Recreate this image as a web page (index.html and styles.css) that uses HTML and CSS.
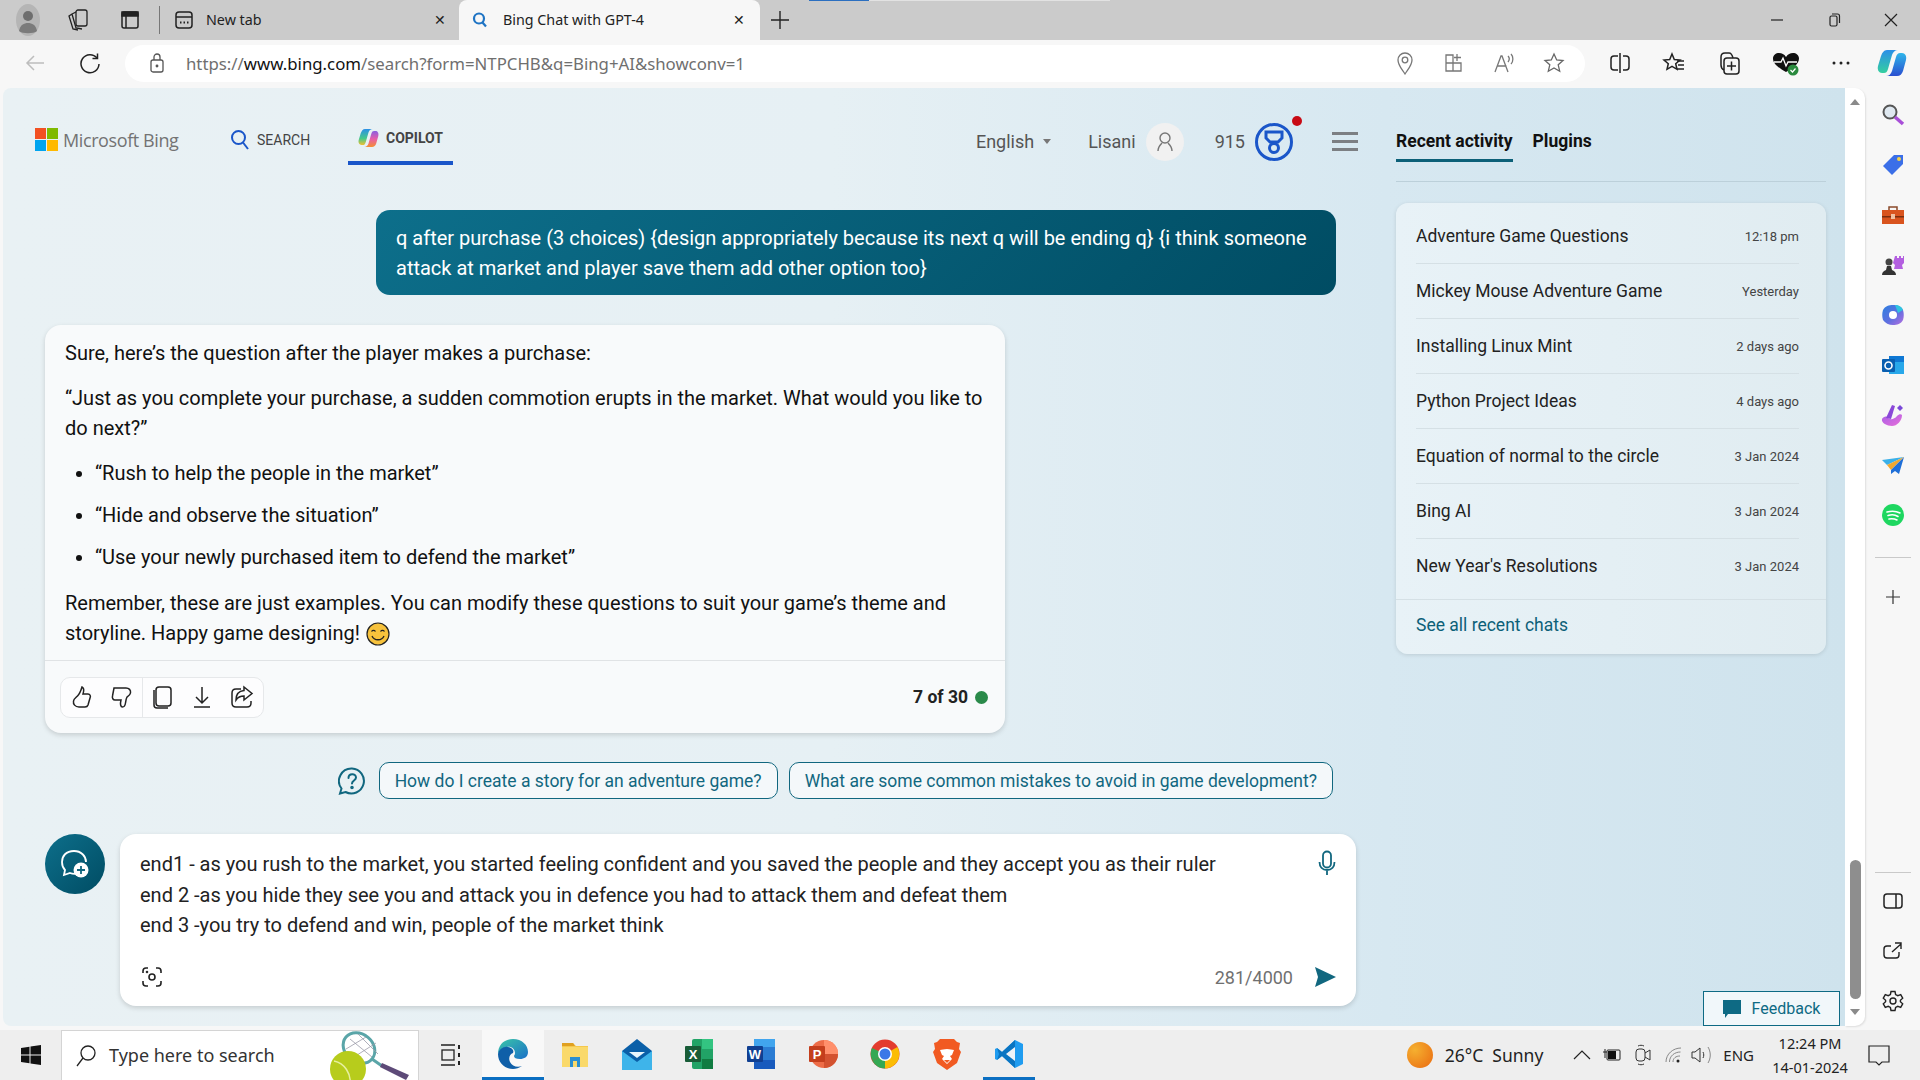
FILE: index.html
```html
<!DOCTYPE html>
<html lang="en">
<head>
  <meta charset="UTF-8">
  <title>Bing Chat with GPT-4</title>
  <link rel="stylesheet" href="styles.css">
</head>
<body>
  <div class="tabbar">
    <div class="progress"></div>
    <div class="tb-btn tb-profile">
      <svg width="24" height="34" viewBox="0 0 24 34"><ellipse cx="12" cy="17" rx="12" ry="16" fill="#b5b5b5"/><circle cx="12" cy="13" r="5" fill="#6e6e6e"/><path d="M3 28c1-6 5-8 9-8s8 2 9 8c-3 3-15 3-18 0z" fill="#7b7b7b"/></svg>
    </div>
    <div class="tb-btn tb-coll">
      <svg width="22" height="24" viewBox="0 0 22 24" fill="none" stroke="#222" stroke-width="1.300"><rect x="9" y="2" width="11" height="16" rx="2"/><path d="M9 4 5 6l4 14 6 1M5 6 2 8l4 13 5 1"/></svg>
    </div>
    <div class="tb-btn tb-tabs">
      <svg width="20" height="20" viewBox="0 0 20 20" fill="none" stroke="#222" stroke-width="1.500"><rect x="2" y="2" width="16" height="16" rx="2"/><rect x="2" y="2" width="16" height="4" fill="#222"/><path d="M6 6v12"/></svg>
    </div>
    <div class="tb-sep"></div>
    <div class="tab tab-new">
      <svg width="20" height="20" viewBox="0 0 20 20" fill="none" stroke="#222" stroke-width="1.500"><rect x="2" y="2" width="16" height="16" rx="3"/><path d="M2 7h16"/><path d="M6 12.500h1.500M9.500 12.500H11M13 12.500h1.500" stroke-width="2"/></svg>
      <span class="tab-title">New tab</span>
      <span class="tab-close">&#x2715;</span>
    </div>
    <div class="tab tab-active">
      <svg width="18" height="18" viewBox="0 0 18 18" fill="none" stroke="#1f74c4" stroke-width="2.200"><circle cx="8" cy="7.500" r="5"/><path d="m11.500 11.500 3.500 4"/></svg>
      <span class="tab-title">Bing Chat with GPT-4</span>
      <span class="tab-close">&#x2715;</span>
    </div>
    <div class="tab-plus">
      <svg width="20" height="20" viewBox="0 0 20 20" stroke="#222" stroke-width="1.400"><path d="M10 1v18M1 10h18"/></svg>
    </div>
    <div class="win-ctrls">
      <svg width="14" height="14" viewBox="0 0 14 14" stroke="#222" stroke-width="1.200"><path d="M1 7h12"/></svg>
      <svg width="14" height="14" viewBox="0 0 14 14" fill="none" stroke="#222" stroke-width="1.200"><rect x="3" y="3" width="7" height="10" rx="1.500"/><path d="M5 1h5.500a2 2 0 0 1 2 2v7"/></svg>
      <svg width="14" height="14" viewBox="0 0 14 14" stroke="#222" stroke-width="1.200"><path d="m1 1 12 12M13 1 1 13"/></svg>
    </div>
  </div>

  <div class="toolbar">
    <svg class="nav-back" width="22" height="22" viewBox="0 0 22 22" fill="none" stroke="#bdbdbd" stroke-width="1.500"><path d="M20 11H3M10 4l-7 7 7 7"/></svg>
    <svg class="nav-reload" width="22" height="22" viewBox="0 0 22 22" fill="none" stroke="#222" stroke-width="1.500"><path d="M18 6a9 9 0 1 0 2 6"/><path d="M18.500 1.500V6.500H13.500"/></svg>
    <div class="address">
      <svg width="16" height="20" viewBox="0 0 16 20" fill="none" stroke="#555" stroke-width="1.300"><rect x="2" y="7" width="12" height="12" rx="2"/><path d="M5 7V4a3 3 0 0 1 6 0v3"/><circle cx="8" cy="13" r=".8" fill="#555"/></svg>
      <span class="url">https://<b>www.bing.com</b>/search?form=NTPCHB&amp;q=Bing+AI&amp;showconv=1</span>
      <div class="addr-icons">
        <svg width="20" height="24" viewBox="0 0 20 24" fill="none" stroke="#777" stroke-width="1.300"><path d="M10 23C6 17 3 14 3 9a7 7 0 0 1 14 0c0 5-3 8-7 14z"/><circle cx="10" cy="9" r="2.800"/></svg>
        <svg width="22" height="22" viewBox="0 0 22 22" fill="none" stroke="#777" stroke-width="1.300"><path d="M10 3H3v8h7V3zM3 11v8h7v-8M10 11h8v8h-8M14 2v7M11 5.500h7"/></svg>
        <svg width="22" height="22" viewBox="0 0 22 22" fill="none" stroke="#777" stroke-width="1.300"><path d="m2 20 6-16h1l6 16M4.500 14h9M15 4c1.500 1.500 1.500 4 0 6M18 2c2.500 2.500 2.500 7.500 0 10"/></svg>
        <svg width="22" height="22" viewBox="0 0 22 22" fill="none" stroke="#666" stroke-width="1.300"><path d="m11 2 2.700 6 6.300.6-4.800 4.200 1.500 6.400L11 16l-5.700 3.200 1.500-6.400L2 8.600 8.300 8z"/></svg>
      </div>
    </div>
    <div class="tool-icons">
      <svg width="22" height="22" viewBox="0 0 22 22" fill="none" stroke="#222" stroke-width="1.500"><path d="M9 4H5a3 3 0 0 0-3 3v8a3 3 0 0 0 3 3h4M11 1v20M14 4h3a3 3 0 0 1 3 3v8a3 3 0 0 1-3 3h-3"/></svg>
      <svg width="24" height="24" viewBox="0 0 24 24" fill="none" stroke="#222" stroke-width="1.500"><path d="m10 3 2.300 5.500 5.700.5-4.300 3.700 1.300 5.600-5-3-5 3 1.300-5.600L2 9l5.700-.5z"/><path d="M15 10h7M16 14h6M15 18h7"/></svg>
      <svg width="24" height="26" viewBox="0 0 24 26" fill="none" stroke="#222" stroke-width="1.500"><rect x="7" y="8" width="15" height="16" rx="3"/><path d="M14.500 11.500v9M10 16h9M7 20c-2-1-3-3-3-5V7c0-2 1-4 4-4h4c2 0 3 1 4 5"/></svg>
      <svg class="heart" width="28" height="26" viewBox="0 0 28 26"><path d="M14 22C7 18 1 14 1 8.500 1 5 4 3 7 3c3 0 5 1 7 4 2-3 4-4 7-4s6 2 6 5.500C27 14 21 18 14 22z" fill="#111"/><path d="M2 12h7l2-4 3 8 2-4h9" fill="none" stroke="#fff" stroke-width="1.300"/><circle cx="21" cy="20" r="5.500" fill="#2a8a3e"/><path d="m18.500 20 2 2 3-3.500" fill="none" stroke="#fff" stroke-width="1.200"/></svg>
      <svg width="20" height="6" viewBox="0 0 20 6" fill="#222"><circle cx="3" cy="3" r="1.500"/><circle cx="10" cy="3" r="1.500"/><circle cx="17" cy="3" r="1.500"/></svg>
      <svg width="30" height="30" viewBox="0 0 30 28"><defs><linearGradient id="cp1" x1="0" y1="0" x2="0" y2="1"><stop offset="0" stop-color="#2a8fe8"/><stop offset="1" stop-color="#35cfa0"/></linearGradient><linearGradient id="cp2" x1="0" y1="0" x2="0" y2="1"><stop offset="0" stop-color="#2fb6ea"/><stop offset="1" stop-color="#2a4fd0"/></linearGradient></defs><path d="M10 1h11c-3 0-5 2-6 5l-4 14c-1 3-2 4-4 4H5c-3 0-5-3-4-7l3-10C5 4 7 1 10 1z" fill="url(#cp1)"/><path d="M20 27H9c3 0 5-2 6-5l4-14c1-3 2-4 4-4h2c3 0 5 3 4 7l-3 11c-1 3-3 5-6 5z" fill="url(#cp2)"/></svg>
    </div>
  </div>

  <div class="content">
    <main class="page">
      <div class="chat-col">
        <header class="head">
          <div class="brand">
            <svg width="23" height="23" viewBox="0 0 23 23"><rect width="11" height="11" fill="#f25022"/><rect x="12" width="11" height="11" fill="#7fba00"/><rect y="12" width="11" height="11" fill="#00a4ef"/><rect x="12" y="12" width="11" height="11" fill="#ffb900"/></svg>
            <span>Microsoft Bing</span>
          </div>
          <div class="nav-item">
            <svg width="20" height="22" viewBox="0 0 20 22" fill="none" stroke="#1a56c9" stroke-width="2"><circle cx="8.500" cy="8.500" r="6.500"/><path d="m13 13.500 5 6.500"/></svg>
            <span>SEARCH</span>
          </div>
          <div class="nav-item nav-active">
            <svg width="21" height="20" viewBox="0 0 30 28"><defs><linearGradient id="cop1" x1="0" y1="0" x2="0" y2="1"><stop offset="0" stop-color="#2a8fe8"/><stop offset=".6" stop-color="#46c98a"/><stop offset="1" stop-color="#f0c030"/></linearGradient><linearGradient id="cop2" x1="0" y1="0" x2="0" y2="1"><stop offset="0" stop-color="#8a5fe0"/><stop offset=".5" stop-color="#e85fa8"/><stop offset="1" stop-color="#f59030"/></linearGradient></defs><path d="M10 1h11c-3 0-5 2-6 5l-4 14c-1 3-2 4-4 4H5c-3 0-5-3-4-7l3-10C5 4 7 1 10 1z" fill="url(#cop1)"/><path d="M20 27H9c3 0 5-2 6-5l4-14c1-3 2-4 4-4h2c3 0 5 3 4 7l-3 11c-1 3-3 5-6 5z" fill="url(#cop2)"/></svg>
            <span>COPILOT</span>
          </div>
          <div class="head-right">
            <span class="lang">English<i class="caret"></i></span>
            <span class="user">Lisani</span>
            <span class="avatar">
              <svg width="18" height="22" viewBox="0 0 18 22" fill="none" stroke="#777" stroke-width="1.400"><circle cx="9" cy="7" r="5"/><path d="M2 20c0-4 2-6 4-8M16 20c0-4-2-6-4-8"/></svg>
            </span>
            <span class="points">915</span>
            <span class="medal">
              <svg width="38" height="38" viewBox="0 0 38 38" fill="none" stroke="#1a56c9" stroke-width="3"><circle cx="19" cy="19" r="17.500"/><path d="M11 9h16v6l-4 4h-8l-4-4z"/><circle cx="19" cy="25" r="4.500"/></svg>
              <i class="red-dot"></i>
            </span>
            <span class="burger"><i></i><i></i><i></i></span>
          </div>
        </header>

        <div class="user-bubble">q after purchase (3 choices) {design appropriately because its next q will be ending q} {i think someone attack at market and player save them add other option too}</div>

        <section class="bot-card">
          <div class="bot-text">
            <p>Sure, here’s the question after the player makes a purchase:</p>
            <p>“Just as you complete your purchase, a sudden commotion erupts in the market. What would you like to do next?”</p>
            <ul>
              <li>“Rush to help the people in the market”</li>
              <li>“Hide and observe the situation”</li>
              <li>“Use your newly purchased item to defend the market”</li>
            </ul>
            <p>Remember, these are just examples. You can modify these questions to suit your game’s theme and storyline. Happy game designing!
              <svg class="emoji" width="24" height="24" viewBox="0 0 24 24"><circle cx="12" cy="12" r="11" fill="#f7c23c" stroke="#222" stroke-width="1.200"/><path d="M5.500 9.500c1-1.500 3-1.500 4 0M14.500 9.500c1-1.500 3-1.500 4 0" fill="none" stroke="#222" stroke-width="1.300"/><path d="M6 14c2 5 10 5 12 0" fill="none" stroke="#222" stroke-width="1.300"/></svg>
            </p>
          </div>
          <div class="bot-foot">
            <div class="actions">
              <div class="act-group">
                <svg width="24" height="24" viewBox="0 0 24 24" fill="none" stroke="#222" stroke-width="1.500"><path d="M12 2c2 1 2 4 1 7h5c2 0 3 2 2 4l-2 7c-.5 1.500-2 2-3 2H9c-4 0-6-3-5.500-6 .3-2 2-3 4-5 2-2 3-4 4.500-9z"/></svg>
                <svg width="24" height="24" viewBox="0 0 24 24" fill="none" stroke="#222" stroke-width="1.500"><path d="M4 3h12c3 0 5 2 4.500 5-.3 2-2 3-3.500 4-1 2-1 3-1.500 6-.3 2-1 4-3 4-2 0-2.500-3-1.500-7H5C3 15 2 13 2.500 11z"/></svg>
              </div>
              <div class="act-group act-right">
                <svg width="24" height="24" viewBox="0 0 24 24" fill="none" stroke="#222" stroke-width="1.500"><rect x="6" y="2" width="15" height="19" rx="3"/><path d="M4 5v15c0 2 1 3 3 3h11"/></svg>
                <svg width="24" height="24" viewBox="0 0 24 24" fill="none" stroke="#222" stroke-width="1.500"><path d="M12 2v16M6 12l6 6 6-6M4 22h16"/></svg>
                <svg width="24" height="24" viewBox="0 0 24 24" fill="none" stroke="#222" stroke-width="1.500"><path d="M11 4H6C3.500 4 2 5.500 2 8v10c0 2.500 1.500 4 4 4h11c2.500 0 4-1.500 4-4v-2"/><path d="M14 2l8 6.500-8 6.500v-4c-4 0-6 1-8 4 0-6 3-9 8-9.500z"/></svg>
              </div>
            </div>
            <div class="turns">7 of 30<i class="green-dot"></i></div>
          </div>
        </section>

        <div class="suggest">
          <svg width="28" height="28" viewBox="0 0 28 28" fill="none" stroke="#11677f" stroke-width="2"><path d="M14 1.500A12.500 12.500 0 1 1 7.500 25L2 26.500l1.500-5A12.500 12.500 0 0 1 14 1.500z"/><path d="M10.500 11c0-5 7.500-5 7.500-.5 0 3-4 3-4 6" stroke-linecap="round"/><circle cx="14" cy="20.500" r=".8" fill="#11677f"/></svg>
          <span class="pill">How do I create a story for an adventure game?</span>
          <span class="pill">What are some common mistakes to avoid in game development?</span>
        </div>

        <div class="composer">
          <div class="new-topic">
            <svg width="30" height="30" viewBox="0 0 30 30" fill="none"><path d="M14 2C6 2 2 7 2 13c0 3 1 6 3 8l-1 5 6-2c2 .8 4 1 6 .8M14 2c7 0 12 5 12 11" stroke="#fff" stroke-width="1.800"/><circle cx="21" cy="21" r="7.500" fill="#fff"/><path d="M21 17v8M17 21h8" stroke="#11677f" stroke-width="1.800"/></svg>
          </div>
          <div class="input-card">
            <div class="input-top">
              <div class="input-text">end1 - as you rush to the market, you started feeling confident and you saved the people and they accept you as their ruler<br>end 2 -as you hide they see you and attack you in defence you had to attack them and defeat them<br>end 3 -you try to defend and win, people of the market think</div>
              <svg width="18" height="26" viewBox="0 0 18 26" fill="none" stroke="#11677f" stroke-width="1.800"><rect x="5" y="1.500" width="8" height="16" rx="4"/><path d="M1.500 12c0 5 3 8 7.500 8s7.500-3 7.500-8M9 20v5"/></svg>
            </div>
            <div class="input-foot">
              <svg class="scan" width="20" height="20" viewBox="0 0 20 20" fill="none" stroke="#222" stroke-width="1.600"><path d="M1 6V4c0-2 1-3 3-3h2M14 1h2c2 0 3 1 3 3v2M19 14v2c0 2-1 3-3 3h-2M6 19H4c-2 0-3-1-3-3v-2"/><circle cx="10" cy="10" r="3"/><circle cx="5" cy="5" r=".5"/></svg>
              <span class="count">281/4000</span>
              <svg width="22" height="22" viewBox="0 0 22 22" fill="#11677f"><path d="M1 1l21 10L1 21l3-10z"/></svg>
            </div>
          </div>
        </div>
      </div>

      <aside class="side-col">
        <div class="side-tabs">
          <span class="side-tab side-tab-on">Recent activity</span>
          <span class="side-tab">Plugins</span>
        </div>
        <div class="recent">
          <div class="row"><span class="row-name">Adventure Game Questions</span><span class="row-time">12:18 pm</span></div>
          <div class="row"><span class="row-name">Mickey Mouse Adventure Game</span><span class="row-time">Yesterday</span></div>
          <div class="row"><span class="row-name">Installing Linux Mint</span><span class="row-time">2 days ago</span></div>
          <div class="row"><span class="row-name">Python Project Ideas</span><span class="row-time">4 days ago</span></div>
          <div class="row"><span class="row-name">Equation of normal to the circle</span><span class="row-time">3 Jan 2024</span></div>
          <div class="row"><span class="row-name">Bing AI</span><span class="row-time">3 Jan 2024</span></div>
          <div class="row"><span class="row-name">New Year's Resolutions</span><span class="row-time">3 Jan 2024</span></div>
          <div class="see-all">See all recent chats</div>
        </div>
      </aside>

      <div class="feedback">
        <svg width="18" height="18" viewBox="0 0 18 18" fill="#0e6a84"><path d="M0 0h18v14H5l-3 4v-4H0z"/></svg>
        <span>Feedback</span>
      </div>
    </main>

    <div class="scroll">
      <i class="arrow-up"></i>
      <div class="thumb"></div>
      <i class="arrow-down"></i>
    </div>

    <nav class="edge-bar">
      <div class="edge-item">
        <svg width="24" height="24" viewBox="0 0 24 24" fill="none"><circle cx="9" cy="9" r="6.500" fill="#dfe8f0" stroke="#555" stroke-width="2"/><path d="m14 14 8 7" stroke="#a84fd8" stroke-width="3.500"/></svg>
      </div>
      <div class="edge-item">
        <svg width="24" height="24" viewBox="0 0 24 24"><path d="M13 2h9v9L11 22 2 13z" fill="#3b6fe8"/><circle cx="18" cy="6" r="2" fill="#f4d24a"/></svg>
      </div>
      <div class="edge-item">
        <svg width="24" height="24" viewBox="0 0 24 24"><path d="M8 7V4h8v3" fill="none" stroke="#8a4a2a" stroke-width="1.500"/><rect x="1" y="7" width="22" height="14" fill="#d9541e"/><rect x="1" y="13" width="22" height="1.500" fill="#7a2e10"/><rect x="10" y="11" width="4" height="5" fill="#f0c0a0"/></svg>
      </div>
      <div class="edge-item">
        <svg width="24" height="24" viewBox="0 0 24 24"><circle cx="8" cy="9" r="3.500" fill="#444"/><path d="M1 22c0-3 2-4 4-5l1-4h4l1 4c2 1 4 2 4 5z" fill="#333"/><path d="M14 3h2v2h2V3h2v2h2V3h1v7l-2 2 1 4h-9l1-4-2-2z" fill="#b35fe0"/></svg>
      </div>
      <div class="edge-item">
        <svg width="24" height="24" viewBox="0 0 24 24"><defs><linearGradient id="m365" x1="0" y1="0" x2="1" y2="1"><stop offset="0" stop-color="#2a7fe0"/><stop offset=".55" stop-color="#5f6fe0"/><stop offset="1" stop-color="#b56fe0"/></linearGradient></defs><path d="M12 2c4 0 8 1 10 5 1 3 1 7 0 10-2 4-6 5-10 5-4 0-8-2-10-5-1-3-1-7 0-10 2-4 6-5 10-5z" fill="url(#m365)"/><path d="M14 2c4 0 7 2 8 5l-5 3z" fill="#2fc3e0"/><circle cx="12" cy="12" r="4" fill="#fff"/></svg>
      </div>
      <div class="edge-item">
        <svg width="24" height="24" viewBox="0 0 24 24"><rect x="8" y="3" width="15" height="18" fill="#28a8ea"/><rect x="8" y="3" width="15" height="6" fill="#0f78d4"/><rect x="1" y="6" width="13" height="13" rx="1" fill="#0a5fb0"/><circle cx="7.500" cy="12.500" r="3.500" fill="none" stroke="#fff" stroke-width="1.600"/></svg>
      </div>
      <div class="edge-item">
        <svg width="24" height="24" viewBox="0 0 24 24"><defs><linearGradient id="dsg" x1="0" y1="0" x2="1" y2="1"><stop offset="0" stop-color="#a85fe8"/><stop offset="1" stop-color="#e86fd8"/></linearGradient></defs><path d="M1 16c1-2 4-3 5-2 2 3 7 3 10-1 2-2 4-2 5-1 0 6-5 11-10 11-5 0-11-3-10-7z" fill="url(#dsg)"/><path d="m5 15 6-13 3 1-4 13z" fill="#8a48d8"/><path d="m19 2 3 3-3 3-3-3z" fill="#7a48d8"/></svg>
      </div>
      <div class="edge-item">
        <svg width="24" height="24" viewBox="0 0 24 24"><path d="M1 7 23 4 6 12z" fill="#3bb0e8"/><path d="M6 12 23 4 10 17z" fill="#f0a830"/><path d="M10 17 23 4 18 21l-4-3-4 3z" fill="#1f6fd8"/></svg>
      </div>
      <div class="edge-item">
        <svg width="24" height="24" viewBox="0 0 24 24" fill="none"><circle cx="12" cy="12" r="11" fill="#1ed760"/><path d="M6 9c4-1 9-1 13 1M7 12.500c3-1 7-1 10 1M8 16c3-.5 5-.5 8 1" stroke="#fff" stroke-width="1.600" stroke-linecap="round"/></svg>
      </div>
      <div class="edge-line"></div>
      <div class="edge-item">
        <svg width="18" height="18" viewBox="0 0 18 18" stroke="#333" stroke-width="1.200"><path d="M9 2v14M2 9h14"/></svg>
      </div>
      <div class="edge-line edge-low"></div>
      <div class="edge-item edge-short">
        <svg width="20" height="18" viewBox="0 0 20 18" fill="none" stroke="#222" stroke-width="1.500"><rect x="1" y="2" width="18" height="14" rx="3"/><path d="M13 2v14"/></svg>
      </div>
      <div class="edge-item">
        <svg width="20" height="20" viewBox="0 0 20 20" fill="none" stroke="#222" stroke-width="1.400"><path d="M16 11v3c0 2-1 3-3 3H4c-2 0-3-1-3-3V8c0-2 1-3 3-3h4"/><path d="M9 11 18 3M12 2h6v6"/></svg>
      </div>
      <div class="edge-item">
        <svg width="22" height="22" viewBox="0 0 22 22" fill="none" stroke="#222" stroke-width="1.400"><path d="M9 1.500h4l.6 3 2.200 1.200 2.900-1 2 3.500-2.300 2v1.600l2.300 2-2 3.500-2.900-1-2.200 1.200-.6 3H9l-.6-3-2.200-1.200-2.900 1-2-3.500 2.300-2v-1.600l-2.300-2 2-3.500 2.900 1 2.200-1.200z"/><circle cx="11" cy="11" r="3"/></svg>
      </div>
    </nav>
  </div>

  <footer class="taskbar">
    <div class="start">
      <svg width="20" height="20" viewBox="0 0 20 20" fill="#111"><path d="M0 3l8.500-1.200v7.700H0zM9.500 1.600 20 0v9.500H9.500zM0 10.500h8.500v7.700L0 17zM9.500 10.500H20V20L9.500 18.400z"/></svg>
    </div>
    <div class="search">
      <svg width="22" height="24" viewBox="0 0 22 24" fill="none" stroke="#222" stroke-width="1.300"><circle cx="13" cy="9" r="7"/><path d="M8 14 2 22"/></svg>
      <span>Type here to search</span>
      <svg class="racket" width="80" height="50" viewBox="0 0 80 50"><ellipse cx="29" cy="17" rx="17" ry="14" fill="none" stroke="#5aa5a8" stroke-width="3" transform="rotate(40 29 17)"/><path d="M20 8l22 18M28 3l20 20M16 18 36 6M24 26 46 12" stroke="#9a9aa8" stroke-width=".8"/><path d="m42 28 10 7" stroke="#5aa5a8" stroke-width="3"/><path d="m52 32 27 12-3 5-26-13z" fill="#5d4a78"/><circle cx="18" cy="38" r="18" fill="#b7cc1c"/><path d="M4 30c10 2 18 12 16 26" fill="none" stroke="#e8f0a0" stroke-width="1.500"/></svg>
    </div>
    <div class="taskview">
      <svg width="22" height="22" viewBox="0 0 22 22" fill="none" stroke="#222" stroke-width="1.300"><path d="M1 1h14M1 21h14"/><rect x="2" y="6" width="12" height="10"/><path d="M19 1v4M19 9v4M19 17v4" stroke-width="2"/></svg>
    </div>
    <div class="task task-edge">
      <svg width="32" height="32" viewBox="0 0 32 32"><defs><linearGradient id="edg" x1="0" y1="0" x2="1" y2="1"><stop offset="0" stop-color="#3ac6a8"/><stop offset="1" stop-color="#1a70c8"/></linearGradient></defs><path d="M16 1c9 0 15 6 15 13 0 5-4 7-8 7-4 0-6-1-6-3 0-1 1-1 1-3 0-4-4-7-8-6C5 10 2 13 1 16 1 7 7 1 16 1z" fill="url(#edg)"/><path d="M1 16c1-5 6-8 10-7 5 1 6 4 5 6-3 1-5 5-3 9 2 4 7 6 12 4-3 2-6 3-9 3C8 31 1 25 1 16z" fill="#0f5fa8"/></svg>
    </div>
    <div class="task">
      <svg width="30" height="30" viewBox="0 0 30 30"><path d="M2 4h11l3 3h12v21H2z" fill="#f5c84c"/><path d="M2 4h11l2 3H2z" fill="#e0a020"/><rect x="2" y="8" width="26" height="20" fill="#fad96a"/><path d="M10 28V18h10v10h-3v-6h-4v6z" fill="#2b8fd0"/></svg>
    </div>
    <div class="task">
      <svg width="30" height="32" viewBox="0 0 30 32"><path d="M15 1 30 13v19H0V13z" fill="#0a5fa8"/><path d="M0 13l15 11 15-11v19H0z" fill="#3eb4ea"/><path d="M7 14h16l-8 6z" fill="#e8f6fd"/></svg>
    </div>
    <div class="task">
      <svg width="30" height="32" viewBox="0 0 30 32"><rect x="8" y="1" width="21" height="30" rx="2" fill="#21a366"/><rect x="18" y="1" width="11" height="10" fill="#33c481"/><rect x="18" y="21" width="11" height="10" fill="#107c41"/><rect x="1" y="8" width="16" height="16" rx="1" fill="#185c37"/><text x="9" y="21" class="ico-letter">X</text></svg>
    </div>
    <div class="task">
      <svg width="30" height="32" viewBox="0 0 30 32"><rect x="8" y="1" width="21" height="30" rx="2" fill="#2b7cd3"/><rect x="8" y="1" width="21" height="8" fill="#41a5ee"/><rect x="8" y="22" width="21" height="9" fill="#185abd"/><rect x="1" y="8" width="16" height="16" rx="1" fill="#103f91"/><text x="9" y="21" class="ico-letter">W</text></svg>
    </div>
    <div class="task">
      <svg width="30" height="30" viewBox="0 0 30 30"><circle cx="16" cy="15" r="14" fill="#ed6c47"/><path d="M16 1a14 14 0 0 1 14 14H16z" fill="#ff8f6b"/><path d="M16 15h14a14 14 0 0 1-14 14z" fill="#d35230"/><rect x="1" y="7" width="16" height="16" rx="1" fill="#c43e1c"/><text x="9" y="20" class="ico-letter">P</text></svg>
    </div>
    <div class="task">
      <svg width="30" height="30" viewBox="0 0 30 30"><circle cx="15" cy="15" r="14.500" fill="#e33b2e"/><path d="M15 15 2.500 22A14.500 14.500 0 0 0 15 29.500z" fill="#34a853"/><path d="M15 15 27.500 8a14.500 14.500 0 0 1-10 21.300L15 29.500z" fill="#fbbc05"/><path d="M2 9A14.500 14.500 0 0 0 2.500 22L15 15z" fill="#34a853"/><circle cx="15" cy="15" r="7" fill="#fff"/><circle cx="15" cy="15" r="5.500" fill="#3b78e7"/></svg>
    </div>
    <div class="task">
      <svg width="28" height="32" viewBox="0 0 28 32"><path d="M7 1h14l3 3 3 1-1 6 2 3-4 11-10 7-10-7L0 14l2-3-1-6 3-1z" fill="#f15a22"/><path d="M7 12c2 0 4-1 7-1s5 1 7 1l-2 5-2 1 2 3-5 5-5-5 2-3-2-1z" fill="#fff"/><path d="M11 22h6l-3 3z" fill="#f15a22"/></svg>
    </div>
    <div class="task task-on">
      <svg width="30" height="30" viewBox="0 0 30 30"><path d="M21 1 29 5v20l-8 4L8 17l-5 4-2-1V10l2-1 5 4z" fill="#1f9cf0"/><path d="M21 1v28l-13-12-5 4 2-6-2-6 5 4z" fill="#0a75c2"/><path d="M21 8 12 15l9 7z" fill="#eef3f8"/></svg>
    </div>
    <div class="tray">
      <i class="sun"></i>
      <span class="weather">26°C&nbsp; Sunny</span>
      <svg class="tray-caret" width="18" height="10" viewBox="0 0 18 10" fill="none" stroke="#222" stroke-width="1.200"><path d="m1 9 8-8 8 8"/></svg>
      <svg class="tray-bat" width="20" height="14" viewBox="0 0 20 14"><rect x="5" y="2" width="13" height="10" rx="1" fill="none" stroke="#222"/><rect x="6" y="3" width="8" height="8" fill="#111"/><path d="M1 4h4M3 1v9" stroke="#222"/></svg>
      <svg class="tray-cam" width="16" height="22" viewBox="0 0 16 22" fill="none" stroke="#333"><rect x="1" y="5" width="9" height="12" rx="3"/><path d="m10 9 5-3v10l-5-3M3 2c2-1 4-1 6 0M3 20c2 1 4 1 6 0"/></svg>
      <svg class="tray-wifi" width="18" height="18" viewBox="0 0 18 18" fill="none" stroke="#888"><path d="M1 16C1 8 8 2 16 2M4.500 16c0-6 5-10 11-10M8 16c0-4 3-6 7-6"/><circle cx="13" cy="15" r="1.500" fill="#222" stroke="none"/></svg>
      <svg class="tray-spk" width="22" height="20" viewBox="0 0 22 20" fill="none" stroke="#333"><path d="M2 7h3l5-4v14l-5-4H2z"/><path d="M13 7c1 2 1 4 0 6"/><path d="M18 2c3 5 3 11 0 16" stroke="#888"/></svg>
      <span class="eng">ENG</span>
      <span class="clock"><span>12:24 PM</span><span>14-01-2024</span></span>
      <svg class="notif" width="22" height="22" viewBox="0 0 22 22" fill="none" stroke="#222" stroke-width="1.200"><path d="M1 2h20v16h-7l-3 3-3-3H1z"/></svg>
    </div>
  </footer>
</body>
</html>
```

FILE: styles.css
```css
* {
  box-sizing: border-box;
}

html,
body {
  margin: 0;
  height: 100%;
}

body {
  width: 1920px;
  height: 1080px;
  overflow: hidden;
  display: flex;
  flex-direction: column;
  font-family: Roboto, "Liberation Sans", sans-serif;
  background: #f7f7f7;
  color: #111;
}

/* browser tabs */
.tabbar {
  height: 40px;
  background: #cbcbcb;
  display: flex;
  align-items: center;
  position: relative;
  font-family: "Noto Sans", sans-serif;
  font-size: 14.300px;
  color: #222;
}

.progress {
  position: absolute;
  top: 0;
  left: 809px;
  width: 301px;
  height: 1px;
  background: linear-gradient(90deg, #2b6fc0 20%, #e2e2e2 20%);
}

.tb-btn {
  display: flex;
  justify-content: center;
}

.tb-profile {
  margin-left: 16px;
  width: 24px;
}

.tb-coll {
  margin-left: 26px;
  width: 24px;
}

.tb-tabs {
  margin-left: 30px;
  width: 20px;
}

.tb-sep {
  width: 1px;
  height: 28px;
  background: #777;
  margin-left: 19px;
}

.tab {
  height: 40px;
  display: flex;
  align-items: center;
  padding-bottom: 1px;
}

.tab-new {
  width: 299px;
  padding-left: 14px;
  padding-right: 13px;
  gap: 12px;
}

.tab-active {
  width: 301px;
  padding-left: 12px;
  padding-right: 15px;
  gap: 14px;
  background: #f7f7f7;
  border-radius: 8px 8px 0 0;
}

.tab-close {
  margin-left: auto;
  font-size: 14px;
}

.tab-plus {
  margin-left: 10px;
  display: flex;
}

.win-ctrls {
  margin-left: auto;
  display: flex;
  gap: 43px;
  padding-right: 22px;
}

/* address row */
.toolbar {
  height: 48px;
  background: #f7f7f7;
  display: flex;
  align-items: center;
  padding-bottom: 2px;
}

.nav-back {
  margin-left: 24px;
}

.nav-reload {
  margin-left: 33px;
}

.address {
  margin-left: 24px;
  width: 1460px;
  height: 37px;
  background: #fff;
  border-radius: 19px;
  display: flex;
  align-items: center;
  padding-left: 24px;
  font-family: "Noto Sans", sans-serif;
}

.url {
  margin-left: 21px;
  font-size: 16.800px;
  color: #6f6f6f;
}

.url b {
  font-weight: 400;
  color: #111;
}

.addr-icons {
  margin-left: auto;
  display: flex;
  align-items: center;
  gap: 28px;
  padding-right: 20px;
}

.tool-icons {
  margin-left: 24px;
  flex: 1;
  display: flex;
  align-items: center;
  gap: 31px;
}

.tool-icons svg:last-child {
  margin-left: -5px;
}

/* page */
.content {
  flex: 1;
  display: flex;
  min-height: 0;
  padding-bottom: 4px;
}

.page {
  position: relative;
  margin-left: 3px;
  flex: 1;
  display: flex;
  background: linear-gradient(90deg, #e9f1f4 0%, #e6f0f4 45%, #d7e8f1 75%, #cfe3ed 100%);
  border-radius: 8px 0 0 8px;
}

.chat-col {
  width: 1393px;
}

.head {
  height: 77px;
  padding: 26px 0 0 32px;
  display: flex;
  align-items: center;
}

.brand {
  display: flex;
  align-items: center;
  gap: 5px;
  font-family: "Open Sans", sans-serif;
  font-size: 18px;
  letter-spacing: -.4px;
  color: #737373;
  width: 195px;
}

.nav-item {
  height: 51px;
  display: flex;
  align-items: center;
  gap: 7px;
  font-size: 14px;
  color: #444;
}

.nav-item:nth-child(2) {
  width: 118px;
}

.nav-active {
  width: 105px;
  justify-content: center;
  font-weight: 700;
  border-bottom: 4px solid #1a56c9;
}

.head-right {
  margin-left: auto;
  display: flex;
  align-items: center;
  margin-right: 38px;
  font-size: 18px;
  color: #555;
  padding-top: 4px;
}

.lang {
  display: flex;
  align-items: center;
}

.caret {
  margin-left: 9px;
  border: 4px solid transparent;
  border-top: 5px solid #777;
  border-bottom: 0;
}

.user {
  margin-left: 37px;
}

.avatar {
  width: 38px;
  height: 38px;
  margin-left: 10px;
  border-radius: 50%;
  background: #f1f1f1;
  display: flex;
  align-items: center;
  justify-content: center;
}

.points {
  margin-left: 31px;
}

.medal {
  margin-left: 10px;
  position: relative;
  display: flex;
}

.red-dot {
  position: absolute;
  top: -7px;
  right: -9px;
  width: 10px;
  height: 10px;
  border-radius: 50%;
  background: #c80a14;
}

.burger {
  margin-left: 39px;
  width: 26px;
  display: flex;
  flex-direction: column;
  gap: 5px;
}

.burger i {
  height: 3px;
  background: #7c7f83;
}

.user-bubble {
  margin: 45px 0 0 373px;
  width: 960px;
  height: 85px;
  padding: 13px 20px;
  border-radius: 14px;
  background: linear-gradient(135deg, #0d6f8b, #004c63);
  color: #fff;
  font-size: 20px;
  line-height: 30px;
}

.bot-card {
  margin: 30px 0 0 42px;
  width: 960px;
  height: 408px;
  background: #f8fafb;
  border-radius: 16px;
  box-shadow: 0 2px 5px rgba(0, 0, 0, .15);
  display: flex;
  flex-direction: column;
}

.bot-text {
  padding: 13px 20px 0;
  height: 336px;
  border-bottom: 1px solid #e0e3e5;
  font-size: 20px;
  line-height: 30px;
}

.bot-text p {
  margin: 0 0 15px;
}

.bot-text ul {
  margin: 0 0 16px;
  padding-left: 30px;
}

.bot-text li {
  margin-bottom: 12px;
}

.emoji {
  vertical-align: -6px;
  margin-left: 1px;
}

.bot-foot {
  flex: 1;
  display: flex;
  align-items: center;
  justify-content: space-between;
  padding: 0 17px 0 15px;
}

.actions {
  height: 41px;
  width: 204px;
  display: flex;
  border: 1px solid #e6e8ea;
  border-radius: 10px;
  background: #fdfdfe;
}

.act-group {
  display: flex;
  align-items: center;
  width: 81px;
  padding-left: 9px;
  gap: 16px;
}

.act-right {
  width: 121px;
  padding-left: 7px;
  border-left: 1px solid #e6e8ea;
}

.turns {
  display: flex;
  align-items: center;
  gap: 7px;
  font-size: 17.500px;
  font-weight: 700;
  color: #222;
}

.green-dot {
  width: 13px;
  height: 13px;
  border-radius: 50%;
  background: #2a8a4a;
}

.suggest {
  margin-top: 29px;
  padding-right: 63px;
  display: flex;
  justify-content: flex-end;
  align-items: center;
  gap: 11px;
}

.suggest svg {
  margin-right: 2px;
}

.pill {
  height: 37px;
  padding: 0 15px;
  display: flex;
  align-items: center;
  border: 1px solid #11677f;
  border-radius: 10px;
  background: #f4f8fa;
  color: #11677f;
  font-size: 17.500px;
}

.composer {
  margin: 35px 0 0 42px;
  display: flex;
  gap: 15px;
}

.new-topic {
  width: 60px;
  height: 60px;
  border-radius: 50%;
  background: linear-gradient(135deg, #0d6f8b, #004c63);
  display: flex;
  align-items: center;
  justify-content: center;
}

.input-card {
  width: 1236px;
  height: 172px;
  background: #fff;
  border-radius: 16px;
  box-shadow: 0 2px 5px rgba(0, 0, 0, .15);
  padding: 15px 20px 0;
  display: flex;
  flex-direction: column;
}

.input-top {
  display: flex;
  justify-content: space-between;
  height: 113px;
}

.input-text {
  font-size: 20px;
  line-height: 30.500px;
  color: #222;
}

.input-top svg {
  margin-right: 0;
  margin-top: 1px;
}

.input-foot {
  display: flex;
  align-items: center;
  height: 30px;
}

.scan {
  margin-left: 2px;
}

.count {
  margin-left: auto;
  margin-right: 21px;
  font-size: 18px;
  color: #707070;
}

/* right column */
.side-col {
  width: 430px;
}

.side-tabs {
  margin-top: 43px;
  height: 51px;
  border-bottom: 1px solid #bcd0da;
  display: flex;
  gap: 20px;
  align-items: flex-start;
}

.side-tab {
  height: 31px;
  font-size: 17.500px;
  font-weight: 700;
  color: #111;
}

.side-tab-on {
  border-bottom: 3px solid #0c6078;
}

.recent {
  margin-top: 21px;
  height: 451px;
  border-radius: 12px;
  background: linear-gradient(90deg, #e8f2f7, #e0ecf1);
  box-shadow: 0 1px 4px rgba(0, 0, 0, .12);
  padding: 6px 27px 0 20px;
}

.row {
  height: 55px;
  display: flex;
  align-items: center;
  justify-content: space-between;
  border-bottom: 1px solid #d5e0e5;
  font-size: 17.500px;
  color: #222;
}

.row:nth-child(7) {
  border-bottom-color: transparent;
  margin-bottom: 5px;
}

.row-time {
  font-size: 13px;
  color: #444;
}

.see-all {
  margin: 0 -27px 0 -20px;
  padding: 15px 20px 0;
  height: 48px;
  border-top: 1px solid #d5e0e5;
  color: #0c6078;
  font-size: 17.500px;
}

.feedback {
  position: absolute;
  right: 5px;
  bottom: 0;
  width: 137px;
  height: 35px;
  border: 1px solid #0e6a84;
  background: #f1f7fa;
  display: flex;
  align-items: center;
  justify-content: center;
  gap: 11px;
  font-size: 16px;
  color: #0e6a84;
}

/* fake scrollbar + edge sidebar */
.scroll {
  width: 20px;
  background: #fff;
  border-radius: 0 10px 10px 0;
  box-shadow: 1px 1px 2px rgba(0, 0, 0, .1);
  display: flex;
  flex-direction: column;
  align-items: center;
  padding: 11px 0;
}

.thumb {
  width: 11px;
  height: 139px;
  margin-top: auto;
  margin-bottom: 10px;
  border-radius: 6px;
  background: #8e8e8e;
}

.arrow-up,
.arrow-down {
  border: 5.500px solid transparent;
  border-top: 0;
  border-bottom: 6px solid #8a8a8a;
}

.arrow-down {
  border-bottom: 0;
  border-top: 6px solid #8a8a8a;
}

.edge-bar {
  width: 55px;
  display: flex;
  flex-direction: column;
  align-items: center;
  padding-top: 2px;
}

.edge-item {
  height: 50px;
  flex: none;
  display: flex;
  align-items: center;
  justify-content: center;
}

.edge-line {
  width: 36px;
  flex: none;
  height: 1px;
  background: #c9c9c9;
  margin: 17px 0 14px;
}

.edge-low {
  margin: auto 0 3px;
}

/* windows taskbar */
.taskbar {
  height: 50px;
  background: #eeeeee;
  display: flex;
  align-items: center;
  font-family: "Noto Sans", sans-serif;
  color: #222;
}

.start {
  width: 61px;
  display: flex;
  justify-content: center;
}

.search {
  width: 358px;
  height: 50px;
  background: #fff;
  border: 1px solid #d4d4d4;
  border-bottom: 0;
  display: flex;
  align-items: center;
  padding-left: 13px;
  font-size: 18px;
  color: #333;
}

.search span {
  margin-left: 12px;
  padding-bottom: 2px;
}

.racket {
  margin-left: auto;
  margin-right: 8px;
}

.taskview {
  width: 63px;
  display: flex;
  justify-content: center;
}

.task {
  width: 62px;
  height: 50px;
  display: flex;
  align-items: center;
  justify-content: center;
  border-bottom: 3px solid transparent;
}

.task-edge {
  background: #f8f8f8;
  border-bottom-color: #0b6fc2;
}

.task-on {
  width: 52px;
  margin: 0 5px;
  border-bottom-color: #0b6fc2;
}

.ico-letter {
  fill: #fff;
  font-family: "Liberation Sans", sans-serif;
  font-size: 13px;
  font-weight: 700;
  text-anchor: middle;
}

.tray {
  margin-left: auto;
  display: flex;
  align-items: center;
  height: 50px;
  font-size: 17px;
  padding-right: 30px;
}

.sun {
  width: 26px;
  height: 26px;
  border-radius: 50%;
  background: radial-gradient(circle at 30% 30%, #f5b030, #ea6a10);
  margin-right: 12px;
}

.weather {
  margin-right: 30px;
  font-size: 17.500px;
}

.tray .tray-caret {
  margin-right: 11px;
}

.tray-bat {
  margin-right: 13px;
}

.tray-cam {
  margin-right: 14px;
}

.tray-wifi {
  margin-right: 7px;
}

.tray-spk {
  margin-right: 9px;
}

.eng {
  font-size: 15px;
  margin: 0 11px 0 2px;
}

.clock {
  width: 90px;
  display: flex;
  flex-direction: column;
  align-items: center;
  font-size: 14.500px;
  line-height: 24px;
}

.tray .notif {
  margin-left: 13px;
}
```
